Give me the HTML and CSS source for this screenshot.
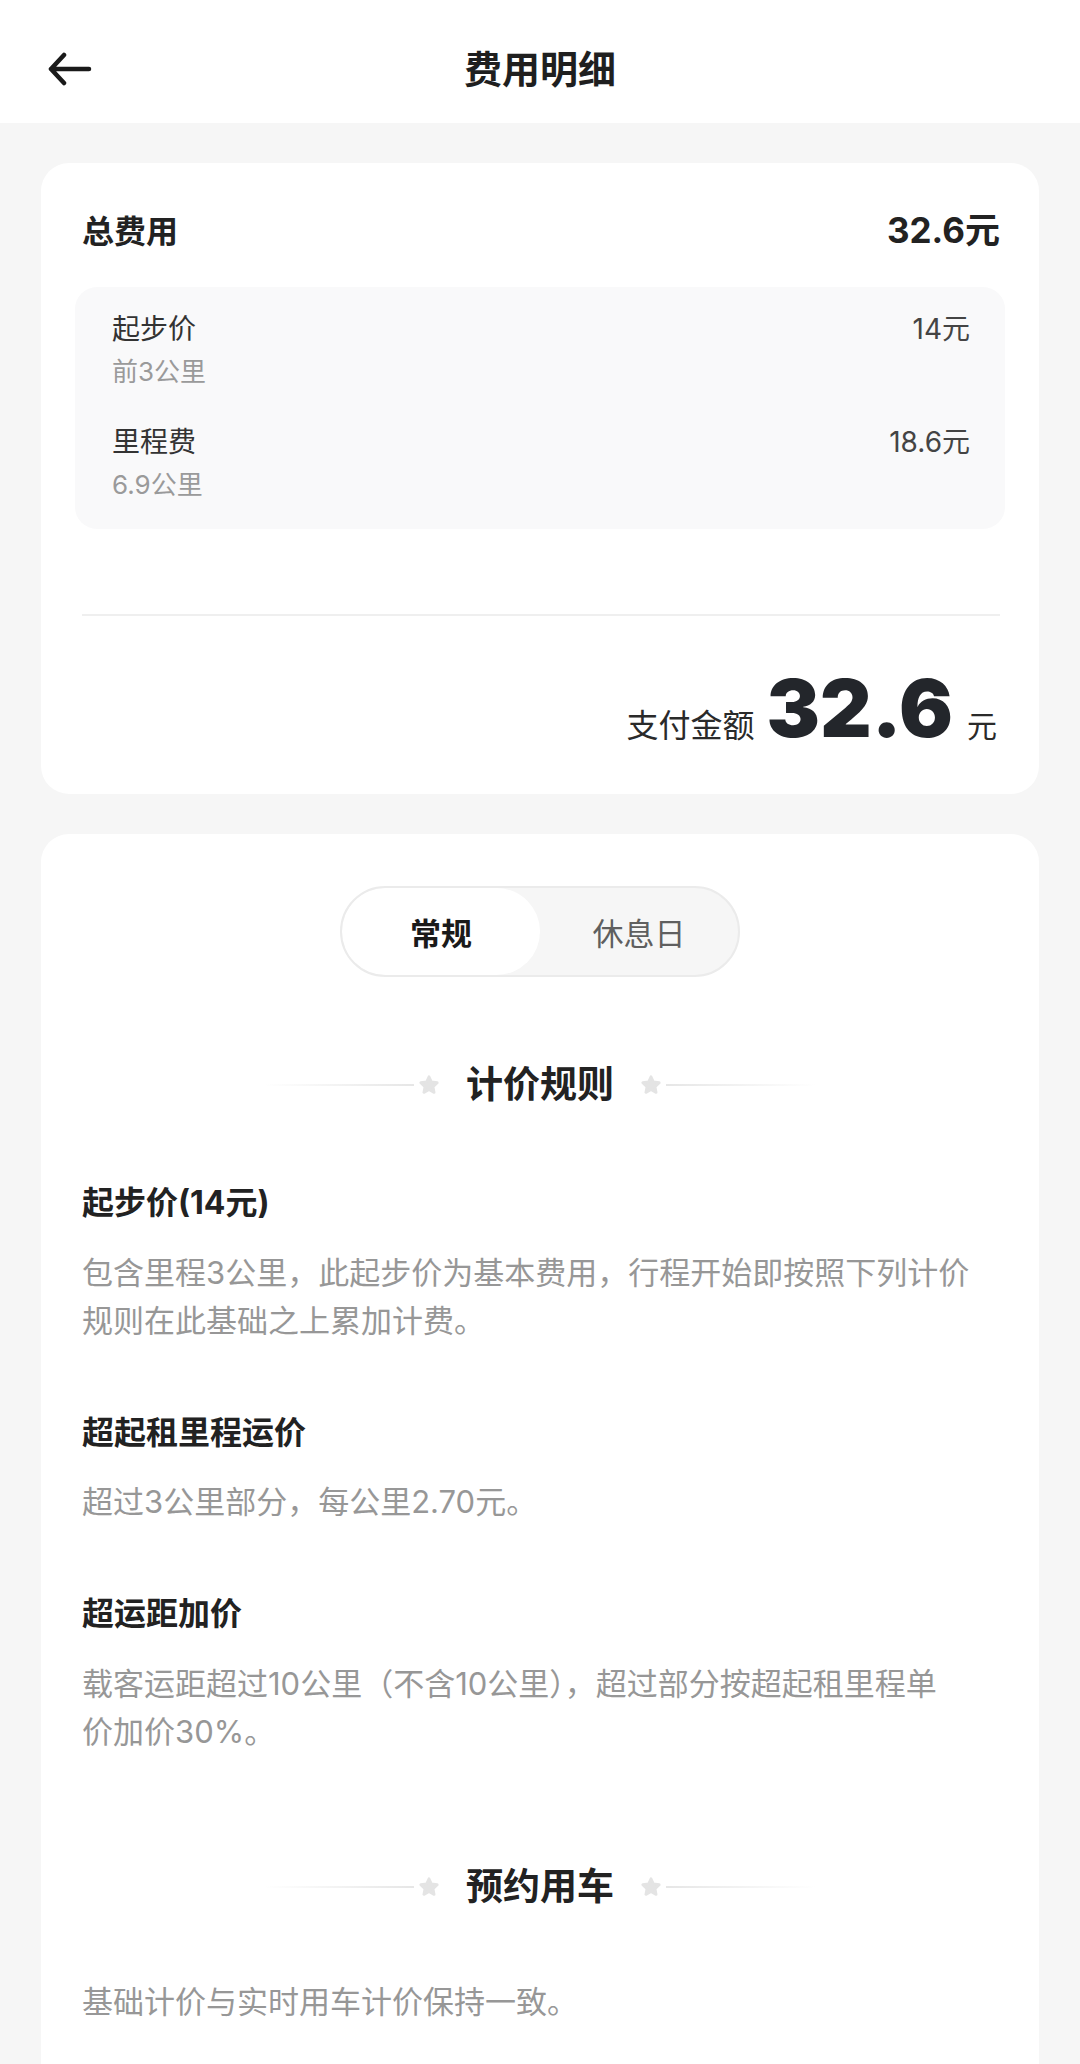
FILE: index.html
```html
<html>
    <head>
        <title>费用明细</title>
        <meta charset="utf-8">
        <link rel="stylesheet" href="styles.css">
    </head>

    <body>
        <div class="topbar">
            <div class="back">
                <svg width="44" height="36" viewBox="0 0 44 36"><path d="M3 18 H41 M3 18 L16 4 M3 18 L16 32" fill="none" stroke="#1a1a1a" stroke-width="4.5" stroke-linecap="round" stroke-linejoin="round"/></svg>
            </div>
            <h1>费用明细</h1>
            <div></div>
        </div>

        <div class="card summary">
            <div class="totalRow">
                <span>总费用</span>
                <span class="totalValue">32.6元</span>
            </div>
            <div class="breakdown">
                <div class="item">
                    <div>
                        <div class="itemName">起步价</div>
                        <div class="itemNote">前3公里</div>
                    </div>
                    <div class="itemPrice">14元</div>
                </div>
                <div class="item">
                    <div>
                        <div class="itemName">里程费</div>
                        <div class="itemNote">6.9公里</div>
                    </div>
                    <div class="itemPrice">18.6元</div>
                </div>
            </div>
            <div class="divider"></div>
            <div class="payRow">
                <span class="payLabel">支付金额</span>
                <span class="payAmount">32.6</span>
                <span class="payUnit">元</span>
            </div>
        </div>

        <div class="card rules">
            <div class="tabs">
                <div class="tab active">常规</div>
                <div class="tab">休息日</div>
            </div>

            <div class="sectionTitle">
                <span class="line left"></span>
                <svg class="star" width="22" height="22" viewBox="0 0 24 24"><polygon points="12,3 14.7,8.7 21,9.5 16.4,13.8 17.6,20.1 12,17 6.4,20.1 7.6,13.8 3,9.5 9.3,8.7" fill="#e4e4e4" stroke="#e4e4e4" stroke-width="3" stroke-linejoin="round"/></svg>
                <h2>计价规则</h2>
                <svg class="star" width="22" height="22" viewBox="0 0 24 24"><polygon points="12,3 14.7,8.7 21,9.5 16.4,13.8 17.6,20.1 12,17 6.4,20.1 7.6,13.8 3,9.5 9.3,8.7" fill="#e4e4e4" stroke="#e4e4e4" stroke-width="3" stroke-linejoin="round"/></svg>
                <span class="line right"></span>
            </div>

            <div class="rule first">
                <h3>起步价(14元)</h3>
                <p>包含里程3公里，此起步价为基本费用，行程开始即按照下列计价规则在此基础之上累加计费。</p>
            </div>
            <div class="rule">
                <h3>超起租里程运价</h3>
                <p class="short">超过3公里部分，每公里2.70元。</p>
            </div>
            <div class="rule">
                <h3>超运距加价</h3>
                <p>载客运距超过10公里（不含10公里），超过部分按超起租里程单<br>价加价30%。</p>
            </div>

            <div class="sectionTitle second">
                <span class="line left"></span>
                <svg class="star" width="22" height="22" viewBox="0 0 24 24"><polygon points="12,3 14.7,8.7 21,9.5 16.4,13.8 17.6,20.1 12,17 6.4,20.1 7.6,13.8 3,9.5 9.3,8.7" fill="#e4e4e4" stroke="#e4e4e4" stroke-width="3" stroke-linejoin="round"/></svg>
                <h2>预约用车</h2>
                <svg class="star" width="22" height="22" viewBox="0 0 24 24"><polygon points="12,3 14.7,8.7 21,9.5 16.4,13.8 17.6,20.1 12,17 6.4,20.1 7.6,13.8 3,9.5 9.3,8.7" fill="#e4e4e4" stroke="#e4e4e4" stroke-width="3" stroke-linejoin="round"/></svg>
                <span class="line right"></span>
            </div>
            <p class="reserve">基础计价与实时用车计价保持一致。</p>
        </div>
    </body>
</html>
```

FILE: styles.css
```css
body {
    margin: 0;
    background-color: #f6f6f6;
    font-family: "Inter", "Noto Sans CJK SC", sans-serif;
    color: #222;
}
.topbar {
    display: grid;
    grid-template-columns: 1fr auto 1fr;
    align-items: center;
    box-sizing: border-box;
    height: 123px;
    padding-top: 14px;
    background-color: white;
}
.back {
    padding-left: 48px;
    height: 36px;
}
.topbar h1 {
    margin: 0;
    font-size: 38px;
    font-weight: 700;
    color: #1f1f1f;
    line-height: 52px;
}
.card {
    margin: 40px 41px 0;
    background-color: white;
    border-radius: 28px;
}
.summary {
    padding: 44px 34px 20px;
}
.totalRow {
    display: flex;
    justify-content: space-between;
    align-items: baseline;
    padding: 0 5px 0 7px;
    font-size: 32px;
    font-weight: 700;
    line-height: 46px;
}
.totalValue {
    font-size: 35px;
}
.breakdown {
    margin-top: 32px;
    padding: 22px 35px 21px 37px;
    background-color: #f9f9fa;
    border-radius: 22px;
}
.item {
    display: flex;
    justify-content: space-between;
}
.item + .item {
    margin-top: 27px;
}
.itemName, .itemPrice {
    font-size: 28px;
    line-height: 40px;
    color: #333;
}
.itemPrice {
    color: #444;
}
.itemNote {
    font-size: 26px;
    line-height: 46px;
    color: #9a9a9a;
}
.divider {
    margin: 85px 5px 0 7px;
    height: 2px;
    background-color: #efefef;
}
.payRow {
    display: flex;
    justify-content: flex-end;
    align-items: baseline;
    margin-top: 44px;
    padding-right: 8px;
    line-height: 96px;
}
.payLabel {
    font-size: 32px;
    color: #2a2a2a;
}
.payAmount {
    margin: 0 14px 0 12px;
    font-size: 80px;
    font-weight: 900;
    color: #23262b;
}
.payUnit {
    font-size: 30px;
    color: #2a2a2a;
}
.rules {
    padding: 52px 41px 80px;
}
.tabs {
    display: flex;
    width: 400px;
    height: 91px;
    box-sizing: border-box;
    margin: 0 auto;
    border: 2px solid #ebebeb;
    border-radius: 46px;
    background-color: #f6f6f6;
    overflow: hidden;
}
.tab {
    flex: 1;
    display: flex;
    align-items: center;
    justify-content: center;
    font-size: 31px;
    color: #5f5f5f;
}
.tab.active {
    background-color: white;
    border-radius: 46px;
    font-weight: 700;
    color: #1a1a1a;
}
.sectionTitle {
    display: flex;
    align-items: center;
    justify-content: center;
    margin-top: 82px;
}
.sectionTitle h2 {
    margin: 0 26px;
    font-size: 37px;
    font-weight: 700;
    line-height: 52px;
    color: #222;
}
.sectionTitle.second {
    margin-top: 105px;
}
.line {
    width: 150px;
    height: 2px;
}
.line.left {
    margin-right: 4px;
    background: linear-gradient(to right, rgba(230, 230, 230, 0), #e6e6e6);
}
.line.right {
    margin-left: 4px;
    background: linear-gradient(to left, rgba(230, 230, 230, 0), #e6e6e6);
}
.rule {
    margin-top: 65px;
}
.rule.first {
    margin-top: 69px;
}
.rule h3 {
    margin: 0;
    font-size: 32px;
    font-weight: 700;
    line-height: 46px;
    color: #222;
}
.rule p, .reserve {
    max-width: 900px;
    margin: 23px 0 0;
    font-size: 31px;
    line-height: 48px;
    color: #979797;
}
.rule p.short {
    margin-top: 22px;
}
.reserve {
    margin-top: 65px;
}
```
